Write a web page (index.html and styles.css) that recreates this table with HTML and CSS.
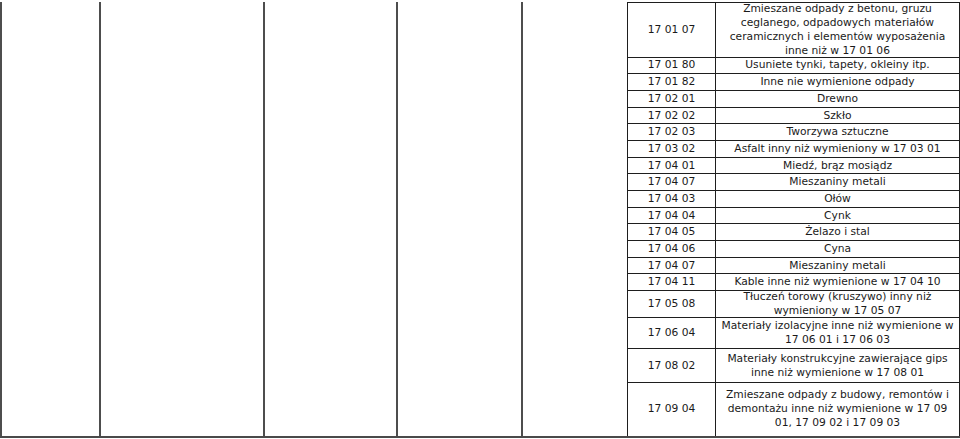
FILE: index.html
```html
<!DOCTYPE html>
<html lang="pl">
<head>
<meta charset="utf-8">
<link rel="stylesheet" href="styles.css">
</head>
<body>
<div class="page">
  <div class="col c1"></div>
  <div class="col c2"></div>
  <div class="col c3"></div>
  <div class="col c4"></div>
  <div class="col c5"></div>
  <div class="inner">
    <div class="row h55"><div class="code">17 01 07</div><div class="desc">Zmieszane odpady z betonu, gruzu<br>ceglanego, odpadowych materiałów<br>ceramicznych i elementów wyposażenia<br>inne niż w 17 01 06</div></div>
    <div class="row h1"><div class="code">17 01 80</div><div class="desc">Usuniete tynki, tapety, okleiny itp.</div></div>
    <div class="row h1"><div class="code">17 01 82</div><div class="desc">Inne nie wymienione odpady</div></div>
    <div class="row h1"><div class="code">17 02 01</div><div class="desc">Drewno</div></div>
    <div class="row h1"><div class="code">17 02 02</div><div class="desc">Szkło</div></div>
    <div class="row h1"><div class="code">17 02 03</div><div class="desc">Tworzywa sztuczne</div></div>
    <div class="row h1"><div class="code">17 03 02</div><div class="desc">Asfalt inny niż wymieniony w 17 03 01</div></div>
    <div class="row h1"><div class="code">17 04 01</div><div class="desc">Miedź, brąz mosiądz</div></div>
    <div class="row h1"><div class="code">17 04 07</div><div class="desc">Mieszaniny metali</div></div>
    <div class="row h1"><div class="code">17 04 03</div><div class="desc">Ołów</div></div>
    <div class="row h1"><div class="code">17 04 04</div><div class="desc">Cynk</div></div>
    <div class="row h1"><div class="code">17 04 05</div><div class="desc">Żelazo i stal</div></div>
    <div class="row h1"><div class="code">17 04 06</div><div class="desc">Cyna</div></div>
    <div class="row h1"><div class="code">17 04 07</div><div class="desc">Mieszaniny metali</div></div>
    <div class="row h1"><div class="code">17 04 11</div><div class="desc">Kable inne niż wymienione w 17 04 10</div></div>
    <div class="row h27"><div class="code">17 05 08</div><div class="desc">Tłuczeń torowy (kruszywo) inny niż<br>wymieniony w 17 05 07</div></div>
    <div class="row h32"><div class="code">17 06 04</div><div class="desc">Materiały izolacyjne inne niż wymienione w<br>17 06 01 i 17 06 03</div></div>
    <div class="row h33"><div class="code">17 08 02</div><div class="desc">Materiały konstrukcyjne zawierające gips<br>inne niż wymienione w 17 08 01</div></div>
    <div class="row h54 last"><div class="code">17 09 04</div><div class="desc">Zmieszane odpady z budowy, remontów i<br>demontażu inne niż wymienione w 17 09<br>01, 17 09 02 i 17 09 03</div></div>
  </div>
</div>
</body>
</html>
```

FILE: styles.css
```css
* { box-sizing: border-box; }

html, body {
  margin: 0;
  padding: 0;
  background: #ffffff;
}

body {
  width: 960px;
  height: 439px;
  overflow: hidden;
  font-family: "DejaVu Sans", Verdana, sans-serif;
  font-size: 10.7px;
  color: #1a1a1a;
}

.page {
  display: flex;
  margin-top: 2px;
  height: 435.5px;
  border-bottom: 2px solid #4a4a4a;
}

.col {
  border-left: 2px solid #4d4d4d;
}

.c1 { width: 99px; }
.c2 { width: 164px; }
.c3 { width: 133px; }
.c4 { width: 125px; }
.c5 { width: 106px; }

.inner {
  width: 333px;
  display: flex;
  flex-direction: column;
  border-top: 1px solid #1e1e1e;
  border-left: 1px solid #1e1e1e;
  border-right: 1px solid #1e1e1e;
}

.row {
  display: flex;
  border-bottom: 1px solid #1e1e1e;
  flex: none;
}

.row.last { border-bottom: none; flex: 1; }

.h55 { height: 54.5px; }
.h1 { height: 16.7px; }
.h27 { height: 26.6px; }
.h32 { height: 31.7px; }
.h33 { height: 33.3px; }
.h54 { height: 53.7px; }

.code {
  width: 88px;
  flex: none;
  border-right: 1px solid #1e1e1e;
  display: flex;
  align-items: center;
  justify-content: center;
  white-space: nowrap;
  line-height: 13.8px;
}

.desc {
  flex: 1;
  display: flex;
  align-items: center;
  justify-content: center;
  text-align: center;
  white-space: nowrap;
  line-height: 13.8px;
}
```
